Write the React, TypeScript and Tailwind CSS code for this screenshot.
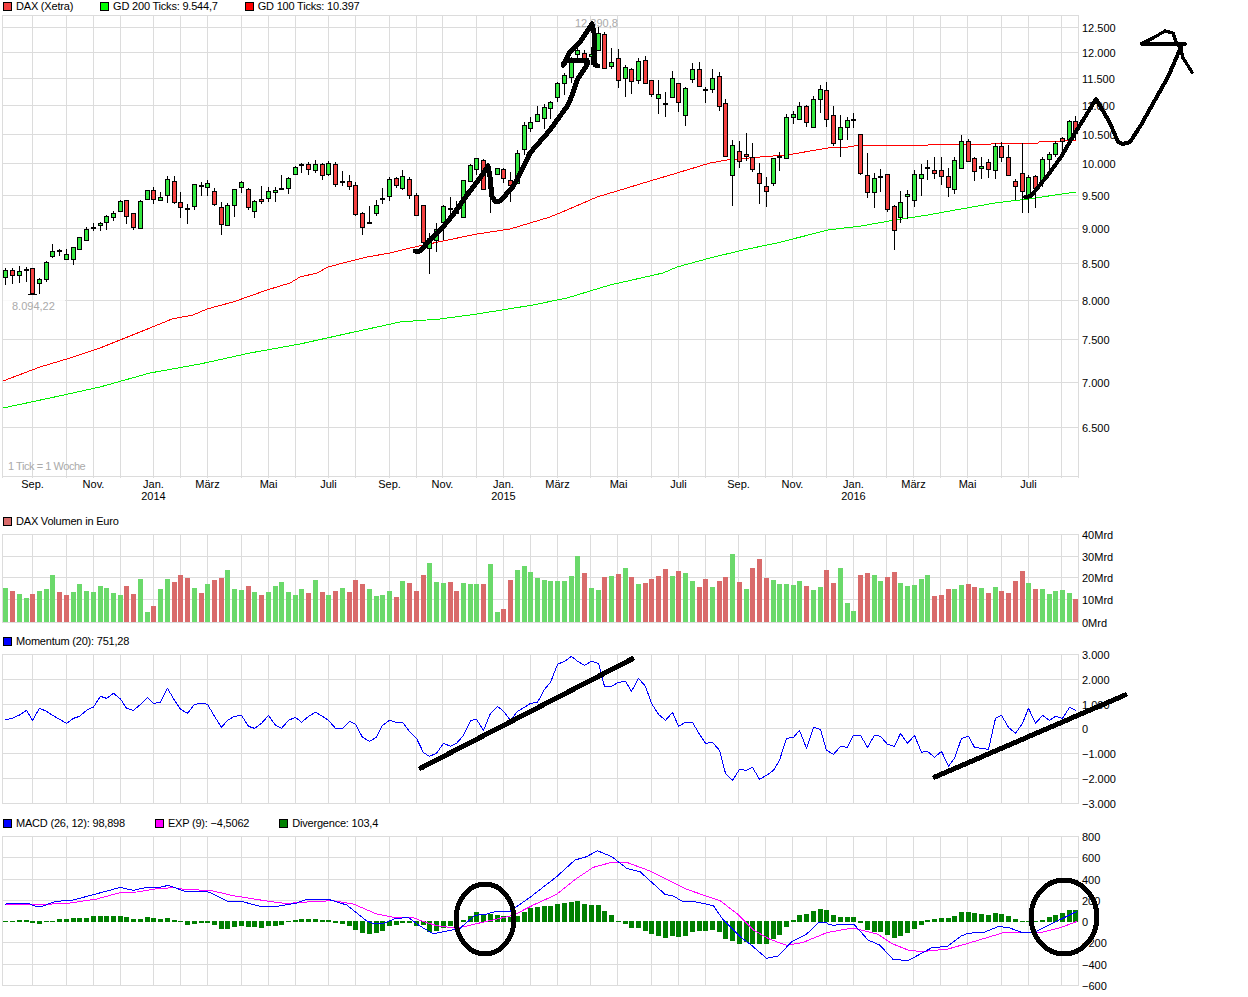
import type { ReactNode } from 'react'

// chart data sampled from the picture at 3x, so y = value / 3 unless noted
type Candle = [number, number, number, number, number]

const candles: Candle[] = [
  [811, 832, 805, 855, 1], [809, 826, 803, 851, 0], [814, 824, 799, 848, 1], [808, 808, 800, 845, 2],
  [805, 878, 803, 882, 0], [838, 850, 835, 882, 1], [787, 838, 784, 845, 1], [752, 769, 732, 773, 1],
  [751, 751, 748, 767, 2], [763, 776, 748, 778, 1], [742, 778, 742, 795, 1], [712, 748, 712, 751, 1],
  [688, 721, 682, 721, 1], [682, 682, 670, 694, 2], [670, 676, 665, 693, 1], [649, 667, 645, 689, 1],
  [640, 652, 633, 663, 1], [604, 634, 601, 635, 1], [601, 649, 601, 672, 0], [640, 682, 640, 690, 0],
  [604, 685, 601, 685, 1], [569, 598, 569, 598, 1], [569, 598, 562, 611, 0], [592, 601, 576, 603, 1],
  [538, 586, 529, 608, 1], [544, 607, 529, 611, 0], [607, 622, 576, 654, 0], [623, 623, 613, 672, 2],
  [553, 619, 551, 629, 1], [554, 554, 547, 587, 2], [550, 562, 541, 587, 1], [574, 613, 565, 617, 0],
  [622, 673, 607, 705, 0], [616, 676, 610, 676, 1], [568, 616, 568, 651, 1], [547, 562, 544, 578, 1],
  [568, 622, 565, 631, 0], [604, 634, 601, 654, 1], [596, 604, 559, 611, 0], [574, 595, 562, 605, 1],
  [571, 577, 562, 605, 1], [563, 563, 526, 571, 2], [535, 565, 532, 581, 1], [502, 523, 499, 525, 1],
  [492, 492, 490, 519, 2], [493, 508, 487, 525, 0], [493, 511, 481, 518, 1], [493, 526, 490, 540, 0],
  [490, 523, 484, 527, 1], [493, 553, 487, 562, 0], [544, 544, 514, 558, 2], [544, 559, 526, 569, 0],
  [556, 643, 547, 647, 0], [640, 682, 637, 705, 0], [665, 665, 619, 673, 2], [616, 640, 601, 647, 1],
  [593, 593, 565, 611, 2], [538, 589, 532, 602, 1], [535, 556, 532, 564, 0], [529, 565, 511, 569, 1],
  [538, 586, 532, 596, 0], [586, 646, 580, 646, 0], [616, 727, 616, 727, 0], [715, 745, 700, 821, 1],
  [688, 720, 670, 757, 1], [619, 667, 616, 720, 1], [623, 623, 592, 660, 2], [623, 640, 604, 640, 0],
  [541, 652, 541, 652, 1], [496, 544, 493, 544, 1], [475, 508, 475, 525, 1], [481, 568, 478, 568, 0],
  [532, 565, 500, 640, 1], [505, 523, 505, 525, 1], [508, 535, 505, 550, 0], [541, 556, 517, 607, 0],
  [460, 550, 451, 550, 1], [376, 448, 365, 466, 1], [367, 385, 350, 396, 1], [343, 364, 319, 367, 1],
  [322, 355, 313, 387, 1], [307, 325, 304, 356, 1], [250, 292, 247, 305, 1], [226, 250, 220, 286, 1],
  [184, 232, 172, 250, 1], [151, 163, 140, 190, 1], [160, 175, 150, 192, 0], [163, 169, 140, 195, 1],
  [100, 150, 80, 150, 1], [103, 205, 97, 208, 0], [187, 199, 145, 208, 1], [175, 241, 148, 263, 0],
  [202, 235, 196, 290, 1], [208, 244, 205, 282, 0], [184, 241, 175, 253, 1], [181, 250, 169, 250, 0],
  [241, 283, 241, 292, 0], [283, 295, 241, 341, 1], [309, 309, 277, 352, 2], [235, 292, 213, 295, 1],
  [250, 307, 250, 335, 0], [265, 346, 262, 377, 1], [208, 238, 190, 250, 1], [208, 259, 187, 262, 0],
  [266, 266, 262, 308, 2], [235, 268, 208, 280, 1], [229, 319, 216, 334, 0], [310, 469, 298, 469, 0],
  [436, 526, 421, 617, 1], [454, 484, 424, 505, 0], [463, 469, 400, 483, 0], [472, 508, 430, 517, 0],
  [520, 550, 490, 613, 0], [559, 574, 532, 620, 0], [475, 550, 475, 559, 1], [469, 469, 457, 513, 2],
  [352, 475, 343, 478, 1], [343, 352, 334, 372, 1], [319, 358, 307, 361, 1], [319, 367, 316, 382, 0],
  [298, 382, 289, 382, 1], [268, 298, 256, 340, 1], [271, 358, 247, 380, 0], [346, 430, 319, 439, 0],
  [382, 418, 346, 470, 1], [361, 382, 352, 420, 1], [358, 358, 340, 385, 2], [403, 520, 403, 526, 0],
  [526, 577, 460, 594, 0], [535, 577, 520, 623, 1], [529, 529, 508, 575, 2], [523, 628, 523, 635, 0],
  [619, 691, 616, 750, 0], [607, 652, 573, 668, 1], [583, 589, 570, 658, 1], [523, 601, 510, 620, 1],
  [523, 535, 491, 587, 1], [500, 500, 480, 540, 2], [511, 520, 471, 537, 0], [511, 529, 471, 555, 0],
  [529, 562, 505, 590, 0], [481, 568, 471, 582, 1], [424, 505, 405, 505, 1], [424, 484, 418, 484, 0],
  [475, 514, 472, 542, 0], [499, 505, 471, 537, 1], [487, 508, 478, 535, 0], [439, 511, 430, 537, 1],
  [439, 472, 427, 485, 0], [472, 525, 435, 528, 0], [544, 559, 538, 600, 0], [520, 574, 430, 640, 0],
  [532, 592, 525, 640, 1], [529, 565, 526, 625, 0], [478, 540, 472, 560, 1], [463, 478, 455, 520, 1],
  [430, 463, 422, 470, 1], [415, 424, 410, 450, 0], [364, 418, 361, 420, 1], [364, 400, 349, 420, 0],
]

// bar height in px, negative means a red bar
const volume = [
  34, -31, 28, 24, -28, 31, 33, 47, -30, -27, 30, 38, 31, 30, 36, 34, 29, 27, -36, -28, 43, 10, -16, 33, 43, -40,
  -47, -44, 34, -29, 38, -42, -44, 52, 33, 32, -36, 30, -27, 30, 36, 40, 30, 27, 33, -29, 42, -30, 27, -31, 34, -30,
  -42, -38, 33, 26, 27, 31, -25, 41, -39, -31, -47, 59, 40, 39, -40, -31, 39, 38, 38, -38, 58, 10, -13, -42, 52, 56,
  50, 44, 42, 41, 41, 41, 46, 66, -49, 34, 32, -45, 46, -48, 54, -45, 38, -39, -43, -46, -53, 46, -51, 49, 41, -35,
  -43, 35, -41, -45, 68, -40, 33, -54, -63, -44, 42, 38, 38, 37, 41, -36, 32, 35, -52, -39, 54, 19, 11, -47, -49, 47,
  41, -45, -50, 39, 36, 37, 43, 47, -26, -27, -33, 33, 37, -38, -35, 34, -29, 35, -31, -29, -41, -51, 39, -33, 33, 28,
  31, 32, 29, -23,
]

const momentum = [
  209, 205, 195, 181, 211, 175, 184, 196, 208, 220, 205, 199, 181, 171, 139, 145, 130, 147, 175, 181, 163, 142, 160,
  157, 115, 151, 178, 190, 163, 160, 163, 199, 232, 211, 199, 196, 229, 235, 220, 196, 226, 235, 211, 202, 217, 199,
  187, 199, 211, 235, 235, 214, 223, 262, 274, 262, 226, 211, 217, 217, 244, 265, 308, 319, 310, 280, 289, 280, 256,
  212, 208, 241, 190, 169, 184, 211, 184, 172, 160, 157, 118, 97, 43, 34, 19, 34, 46, 34, 40, 109, 109, 97, 94, 124,
  85, 109, 160, 193, 211, 187, 229, 217, 217, 253, 280, 277, 301, 370, 391, 358, 361, 352, 388, 376, 361, 331, 265,
  262, 241, 295, 232, 238, 301, 313, 289, 292, 256, 256, 292, 256, 259, 283, 289, 250, 280, 256, 307, 304, 322, 304,
  349, 325, 265, 259, 292, 295, 298, 205, 196, 232, 250, 220, 175, 220, 196, 211, 199, 205, 172, 181,
]

const divergence = [
  1, 1, 2, 2, -2, -3, -1, 1, 3, 3, 4, 4, 4, 6, 6, 6, 6, 6, 5, 3, 3, 5, 4, 3, 4, 2, -1, -4, -3, -2, -2, -4, -8, -8, -6,
  -5, -6, -6, -7, -5, -5, -4, -1, 2, 3, 3, 3, 2, 2, -2, -3, -5, -9, -12, -13, -12, -10, -5, -4, -2, -2, -5, -4, -11,
  -10, -7, -5, -1, 2, 6, 10, 7, 8, 7, 6, 5, 6, 10, 14, 15, 16, 16, 18, 19, 20, 21, 18, 17, 17, 11, 7, 1, -3, -7, -7,
  -10, -13, -15, -17, -15, -16, -15, -11, -10, -10, -9, -11, -18, -20, -23, -21, -23, -23, -23, -18, -14, -6, 2, 7, 8,
  11, 13, 12, 7, 5, 5, 5, -2, -9, -11, -11, -14, -17, -15, -12, -8, -4, 2, 3, 4, 4, 6, 10, 10, 9, 8, 7, 9, 8, 6, 3, 1,
  1, -1, 2, 5, 7, 9, 12, 12,
]

const gridX = [
  2, 32, 66, 93, 120, 153, 180, 207, 241, 268, 295, 328, 355, 389, 416, 442, 476, 503, 530, 557, 590, 617, 651, 678,
  705, 738, 765, 792, 826, 853, 886, 913, 940, 967, 1001, 1028, 1061, 1078,
]

const months = [
  ['Sep.', 32], ['Nov.', 93], ['Jan.', 153], ['März', 207], ['Mai', 268], ['Juli', 328], ['Sep.', 389], ['Nov.', 442],
  ['Jan.', 503], ['März', 557], ['Mai', 618], ['Juli', 678], ['Sep.', 738], ['Nov.', 792], ['Jan.', 853], ['März', 913],
  ['Mai', 967], ['Juli', 1028],
] as const

const priceAxis: [string, number][] = [
  ['12.500', 27], ['12.000', 52], ['11.500', 78], ['11.000', 105], ['10.500', 134], ['10.000', 163], ['9.500', 195],
  ['9.000', 228], ['8.500', 263], ['8.000', 300], ['7.500', 339], ['7.000', 382], ['6.500', 427],
]
const volumeAxis: [string, number][] = [['40Mrd', 534], ['30Mrd', 556], ['20Mrd', 577], ['10Mrd', 599], ['0Mrd', 622]]
const momentumAxis: [string, number][] = [
  ['3.000', 654], ['2.000', 679], ['1.000', 704], ['0', 728], ['−1.000', 753], ['−2.000', 778], ['−3.000', 803],
]
const macdAxis: [string, number][] = [
  ['800', 836], ['600', 857], ['400', 879], ['200', 900], ['0', 921], ['−200', 942], ['−400', 964], ['−600', 985],
]

const gd100 =
  '3,381 40,367 70,358 100,348 120,340 150,328 172,319 193,315 207,309 233,302 253,295 267,290 290,283 300,277 317,273 328,267 347,262 367,257 390,253 410,248 443,241 477,234 510,229 550,217 567,210 597,197 627,188 650,181 677,173 710,163 727,160 760,157 787,155 828,148 848,147 861,145 928,145 932,144 991,144 992,143 1038,143 1039,142 1061,141 1076,140'
const gd200 =
  '3,408 50,398 100,387 150,373 200,364 250,353 300,344 345,334 400,322 440,319 477,314 533,305 567,298 610,285 663,273 677,267 710,258 743,250 777,243 828,230 861,226 895,220 928,215 961,209 995,203 1028,199 1076,192'

const handUp =
  '415,251 420,251 430,240 443,227 453,215 467,195 480,178 488,166 490,177 492,197 496,202 500,201 512,188 517,180 530,153 550,130 568,105 573,93 577,80 587,65 587,60 567,60 563,65 570,52 580,42 592,24 594,33 595,65 598,66'
const handForecast =
  '1025,197 1031,196 1048,175 1061,157 1075,133 1085,117 1096,99 1110,123 1118,142 1123,144 1130,142 1141,125 1155,100 1168,77 1181,47'
const handArrow = '1186,44 1141,44 1153,38 1165,31 1173,33 1176,42 1181,50 1183,58 1192,72'

const sampled = (ox: number, oy: number, raw: number[][]) =>
  raw.map(([x, y]) => `${ox + x / 3},${oy + y / 3}`).join(' ')

const macdLine = [
  sampled(0, 810, [[15, 283], [27, 280], [85, 280], [95, 285], [110, 289], [130, 288], [150, 280], [170, 274], [220, 270], [280, 254], [340, 238], [360, 232], [400, 241], [440, 232], [480, 232], [505, 226], [560, 246], [620, 244], [640, 252], [680, 273], [720, 273], [780, 289], [830, 289], [890, 279], [920, 268], [985, 268], [1040, 285], [1100, 333], [1120, 340], [1150, 340], [1185, 326], [1225, 322]]),
  sampled(420, 810, [[0, 348], [40, 372], [60, 367], [120, 355], [165, 316], [200, 312], [230, 304], [270, 304], [330, 262], [410, 200], [465, 150], [500, 140], [532, 122], [575, 140], [620, 175], [660, 185], [735, 253], [760, 258], [790, 276], [820, 274], [880, 287], [910, 330], [960, 380], [990, 402], [1040, 445], [1075, 438], [1115, 395], [1160, 372], [1195, 338], [1220, 338]]),
  sampled(828, 810, [[0, 342], [15, 346], [45, 343], [78, 343], [120, 390], [155, 405], [195, 448], [240, 452], [310, 414], [360, 408], [400, 378], [420, 370], [470, 366], [510, 350], [540, 352], [580, 367], [620, 367], [680, 337], [745, 305]]),
].join(' ')

const expLine = [
  sampled(0, 810, [[15, 283], [70, 284], [90, 284], [140, 283], [210, 279], [290, 267], [360, 248], [410, 246], [470, 236], [520, 233], [560, 239], [630, 241], [700, 257], [800, 273], [860, 281], [900, 277], [1000, 272], [1060, 282], [1130, 312], [1180, 322], [1240, 323]]),
  sampled(420, 810, [[0, 331], [50, 347], [110, 355], [200, 334], [280, 316], [340, 285], [410, 253], [470, 205], [520, 172], [575, 157], [620, 157], [690, 183], [800, 238], [900, 272], [950, 310], [1000, 360], [1050, 388], [1100, 406], [1150, 397], [1220, 368]]),
  sampled(828, 810, [[0, 367], [75, 354], [120, 365], [150, 373], [190, 400], [240, 420], [280, 425], [360, 417], [420, 400], [530, 367], [640, 367], [700, 352], [745, 335]]),
].join(' ')

const column = (i: number) => Math.round(5.35 + 6.73 * i)

function Legend({ items, className = 'gap-[27px]' }: { items: [string, string][]; className?: string }) {
  return (
    <div className={`flex h-[12px] items-center pl-[3px] leading-none tracking-[-0.2px] ${className}`}>
      {items.map(([color, label]) => (
        <div key={label} className="flex items-center gap-1">
          <span className="h-[9px] w-[9px] border border-black" style={{ backgroundColor: color }} />
          <span className="whitespace-pre">{label}</span>
        </div>
      ))}
    </div>
  )
}

function Panel({ top, height, className, lines, axis, tick = 0, children }: {
  top: number
  height: number
  className: string
  lines: number[]
  axis: [string, number][]
  tick?: number
  children: ReactNode
}) {
  const first = lines[0]
  const last = lines[lines.length - 1]
  return (
    <svg viewBox={`0 ${top} 1248 ${height}`} className={`block w-[1248px] ${className}`}>
      <g stroke="#dcdcdc" shapeRendering="crispEdges">
        {lines.map((y) => <line key={y} x1={2} x2={1079} y1={y + 0.5} y2={y + 0.5} />)}
        {gridX.map((x) => <line key={x} x1={x + 0.5} x2={x + 0.5} y1={first} y2={last + 1 + tick} />)}
      </g>
      {axis.map(([label, y]) => (
        <text key={label} x={1082} y={y + 5} fill="#000">{label}</text>
      ))}
      {children}
    </svg>
  )
}

function CandleMark({ candle, i }: { candle: Candle; i: number }) {
  const [top, bottom, high, low, kind] = candle
  const c = column(i)
  const y1 = Math.round(top / 3)
  const y2 = Math.round(bottom / 3)
  return (
    <g shapeRendering="crispEdges">
      <line x1={c + 0.5} x2={c + 0.5} y1={Math.round(high / 3)} y2={Math.round(low / 3)} stroke="#000" />
      {kind === 2 ? (
        <rect x={c - 2} y={y1} width={5} height={2} fill="#000" />
      ) : (
        <rect
          x={c - 1.5}
          y={y1 + 0.5}
          width={4}
          height={Math.max(y2 - y1, 1)}
          fill={kind === 1 ? '#33e63f' : '#f24040'}
          stroke="#000"
        />
      )}
    </g>
  )
}

function Stroke({ points, width, color = '#000' }: { points: string; width: number; color?: string }) {
  return (
    <polyline
      points={points}
      fill="none"
      stroke={color}
      strokeWidth={width}
      strokeLinejoin="round"
      strokeLinecap="round"
      shapeRendering="crispEdges"
    />
  )
}

export default function App() {
  const lineOf = (values: number[], oy: number) =>
    values.map((v, i) => `${column(i) + 0.5},${oy + v / 3}`).join(' ')

  return (
    <div className="h-[997px] w-[1248px] overflow-hidden bg-white font-['Liberation_Sans',Arial,sans-serif] text-[11px] text-black">
      <Legend items={[['#f24040', 'DAX (Xetra)'], ['#00ff00', 'GD 200 Ticks: 9.544,7'], ['#ff0000', 'GD 100 Ticks: 10.397']]} />
      <Panel
        top={12}
        height={502}
        className="h-[502px]"
        lines={[15, 27, 52, 78, 105, 134, 163, 195, 228, 263, 300, 339, 382, 427, 476]}
        axis={priceAxis}
        tick={1}
      >
        <rect x={3} y={300} width={62} height={1} fill="#fff" opacity={0.85} />
        <Stroke points={gd200} width={1} color="#00f000" />
        <Stroke points={gd100} width={1} color="#ff0000" />
        {candles.map((candle, i) => <CandleMark key={i} candle={candle} i={i} />)}
        <line x1={28} x2={37} y1={294.5} y2={294.5} stroke="#000" shapeRendering="crispEdges" />
        <text x={12} y={310} fill="#aaa">8.094,22</text>
        <text x={575} y={27} fill="#aaa">12.390,8</text>
        <text x={8} y={470} fill="#aaa" className="tracking-[-0.45px]">1 Tick = 1 Woche</text>
        {months.map(([label, x], i) => (
          <text key={i} x={x + 0.5} y={488} textAnchor="middle" fill="#000">{label}</text>
        ))}
        <text x={153.5} y={500} textAnchor="middle" fill="#000">2014</text>
        <text x={503.5} y={500} textAnchor="middle" fill="#000">2015</text>
        <text x={853.5} y={500} textAnchor="middle" fill="#000">2016</text>
        <Stroke points={handUp} width={5} />
        <Stroke points={handForecast} width={4} />
        <Stroke points={handArrow} width={3.2} />
      </Panel>

      <div className="mt-px">
        <Legend items={[['#d96b6b', 'DAX Volumen in Euro']]} />
      </div>
      <Panel top={527} height={107} className="h-[107px]" lines={[534, 556, 577, 599, 622]} axis={volumeAxis}>
        <g shapeRendering="crispEdges">
          {volume.map((v, i) => (
            <rect
              key={i}
              x={column(i) - 2}
              y={622 - Math.abs(v)}
              width={5}
              height={Math.abs(v)}
              fill={v > 0 ? '#6bd96b' : '#d96b6b'}
            />
          ))}
        </g>
      </Panel>

      <div className="mt-px">
        <Legend items={[['#0000ff', 'Momentum (20): 751,28']]} />
      </div>
      <Panel top={647} height={169} className="h-[169px]" lines={[654, 679, 704, 728, 753, 778, 803]} axis={momentumAxis}>
        <Stroke points={lineOf(momentum, 650)} width={1} color="#0000ff" />
        <Stroke points="421,768 632,659" width={5} />
        <Stroke points="935,777 1125,695" width={5} />
      </Panel>

      <div className="mt-px">
        <Legend
          className="gap-[30px]"
          items={[['#0000ff', 'MACD (26, 12): 98,898'], ['#ff00ff', 'EXP (9): −4,5062'], ['#008000', 'Divergence: 103,4']]}
        />
      </div>
      <Panel top={829} height={167} className="h-[167px]" lines={[836, 857, 879, 900, 942, 964, 985]} axis={macdAxis}>
        <g shapeRendering="crispEdges">
          {divergence.map((v, i) => (
            <rect
              key={i}
              x={column(i) - 2}
              y={v > 0 ? 922 - v : 921}
              width={5}
              height={Math.abs(v)}
              fill="#007f00"
            />
          ))}
        </g>
        <Stroke points={expLine} width={1} color="#ff00ff" />
        <Stroke points={macdLine} width={1} color="#0000ff" />
        <ellipse cx={485} cy={919} rx={29} ry={35} fill="none" stroke="#000" strokeWidth={5} shapeRendering="crispEdges" />
        <ellipse cx={1064} cy={917} rx={33} ry={37} fill="none" stroke="#000" strokeWidth={5} shapeRendering="crispEdges" />
      </Panel>
    </div>
  )
}
